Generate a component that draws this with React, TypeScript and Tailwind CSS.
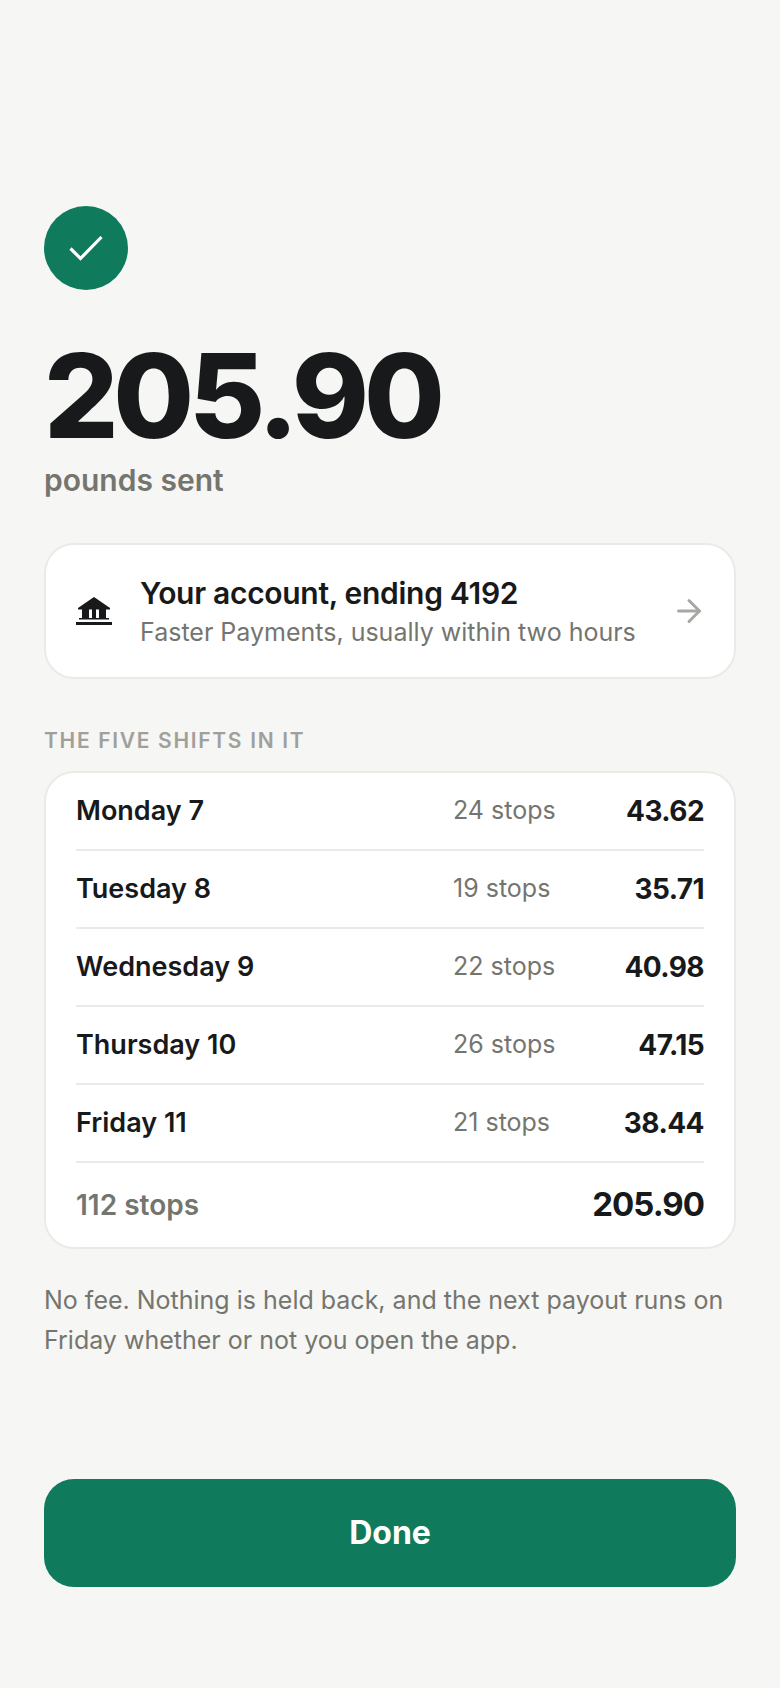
import { ArrowRight } from "lucide-react";

const shifts = [
  { day: "Monday 7", stops: "24 stops", amount: "43.62" },
  { day: "Tuesday 8", stops: "19 stops", amount: "35.71" },
  { day: "Wednesday 9", stops: "22 stops", amount: "40.98" },
  { day: "Thursday 10", stops: "26 stops", amount: "47.15" },
  { day: "Friday 11", stops: "21 stops", amount: "38.44" },
];

function BankIcon() {
  return (
    <svg viewBox="0 0 36 30" className="h-[30px] w-9 fill-[#17191a]">
      <path d="M18 1 34 12V13.500H2V12Z" />
      <path d="M6 13h24v9H6Z" />
      <path d="M13 13.500h3V22h-3Zm7 0h3V22h-3Z" className="fill-white" />
      <path d="M3 22h30v1.500H3Z" />
      <path d="M0 26h36v3H0Z" />
    </svg>
  );
}

export default function App() {
  return (
    <div className="flex h-[1688px] w-[780px] flex-col bg-[#f6f6f4] px-11 pt-[206px] pb-[101px] font-['Inter',sans-serif] text-[#17191a]">
      <div className="flex h-[84px] w-[84px] items-center justify-center rounded-full bg-[#0f7b5c]">
        <svg viewBox="0 0 34 26" className="h-[26px] w-[34px] fill-none stroke-white stroke-[3.2]">
          <path d="M1.500 13.500 11.500 23.500 32.500 2" />
        </svg>
      </div>

      <h1 className="mt-[42px] text-[117px] leading-[128px] font-extrabold tracking-[-0.045em]">205.90</h1>
      <p className="text-[30px] leading-[40px] font-semibold text-[#75756f]">pounds sent</p>

      <div className="mt-[43px] flex h-[136px] items-center rounded-[30px] border-2 border-[#eaeae7] bg-white pr-[27px] pl-[30px]">
        <BankIcon />
        <div className="ml-7 flex-1 pt-0.5">
          <p className="text-[30px] leading-[40px] font-semibold tracking-[-0.01em]">Your account, ending 4192</p>
          <p className="text-[25px] leading-[38px] text-[#75756f]">Faster Payments, usually within two hours</p>
        </div>
        <ArrowRight className="h-9 w-9 text-[#a8a8a3]" strokeWidth={2} />
      </div>

      <p className="mt-12 text-[21px] leading-7 font-semibold tracking-[0.08em] text-[#a0a09b]">THE FIVE SHIFTS IN IT</p>

      <div className="mt-4 rounded-[30px] border-2 border-[#eaeae7] bg-white px-[30px]">
        {shifts.map((shift) => (
          <div key={shift.day} className="flex h-[78px] items-center border-b-2 border-[#eaeae7]">
            <span className="flex-1 text-[27px] font-semibold">{shift.day}</span>
            <span className="w-[151px] text-[25px] text-[#75756f]">{shift.stops}</span>
            <span className="w-[100px] text-right text-[28px] font-bold tracking-[-0.02em]">{shift.amount}</span>
          </div>
        ))}
        <div className="flex h-[84px] items-center justify-between">
          <span className="text-[28px] font-semibold text-[#75756f]">112 stops</span>
          <span className="text-[33px] font-bold tracking-[-0.03em]">205.90</span>
        </div>
      </div>

      <p className="mt-[31px] text-[25px] leading-[40px] text-[#75756f]">
        No fee. Nothing is held back, and the next payout runs on Friday whether or not you open the app.
      </p>

      <button className="mt-auto h-[108px] rounded-[30px] bg-[#0f7b5c] text-[32px] font-bold text-white">Done</button>
    </div>
  );
}
